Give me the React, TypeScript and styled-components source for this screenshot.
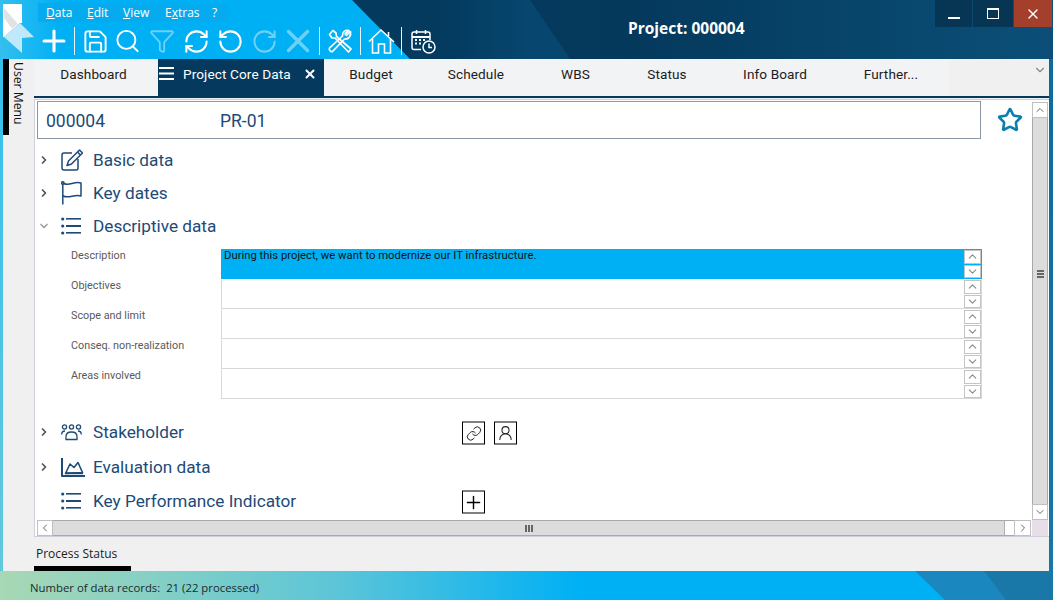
import React from 'react';
import styled, { createGlobalStyle } from 'styled-components';
import {
  ChevronDown,
  ChevronLeft,
  ChevronRight,
  ChevronUp,
  Funnel,
  Link,
  Plus,
  RefreshCw,
  RotateCcw,
  RotateCw,
  Save,
  Search,
  Star,
  UserRound,
  X,
} from 'lucide-react';

const GlobalStyle = createGlobalStyle`
  html, body {
    margin: 0;
    padding: 0;
    overflow: hidden;
  }
  * {
    box-sizing: border-box;
  }
`;

const Window = styled.div`
  position: relative;
  width: 1053px;
  height: 600px;
  overflow: hidden;
  display: grid;
  grid-template-rows: 59px 512px 29px;
  background: linear-gradient(90deg, #063f64 0%, #04395c 60%, #0b4f78 100%);
  font-family: Roboto, sans-serif;
`;

const Header = styled.header`
  position: relative;
  display: flex;
  padding-left: 3px;
  color: #fff;

  &::before {
    content: '';
    position: absolute;
    inset: 0;
    background: linear-gradient(90deg, #033a5e 440px, #07466f 530px);
    clip-path: polygon(0 0, 530px 0, 570px 100%, 0 100%);
  }

  &::after {
    content: '';
    position: absolute;
    inset: 0;
    background: linear-gradient(90deg, #34bfee 0, #00b0f5 60px);
    clip-path: polygon(0 0, 352px 0, 410px 100%, 0 100%);
  }

  > * {
    position: relative;
    z-index: 1;
  }
`;

const LogoMark = styled.svg`
  width: 33px;
  height: 54px;
  margin-top: 3px;
  flex: none;
`;

const HeaderTools = styled.div`
  display: flex;
  flex-direction: column;
  margin-left: 2px;
`;

const MenuBar = styled.nav`
  display: flex;
  align-items: center;
  width: 190px;
  height: 19px;
  margin-top: 3px;
  background: #05abee;
  font: 12px 'Open Sans', sans-serif;
`;

const MenuItem = styled.span<{ $width: number }>`
  width: ${(p) => p.$width}px;
  flex: none;
  padding-left: 8px;

  u {
    text-underline-offset: 1px;
  }
`;

const Toolbar = styled.div`
  display: flex;
  align-items: center;
  height: 32px;
  margin-top: 3px;
  margin-left: -1px;
`;

const ToolIcon = styled.span<{ $width: number; $faded?: boolean }>`
  width: ${(p) => p.$width}px;
  flex: none;
  display: flex;
  justify-content: center;
  opacity: ${(p) => (p.$faded ? 0.42 : 1)};
`;

const ToolDivider = styled.span<{ $offset?: number }>`
  width: 1px;
  height: 28px;
  flex: none;
  margin: 0 1px 0 ${(p) => p.$offset ?? 1}px;
  background: #e8f7fe;
`;

const ProjectTitle = styled.div`
  position: absolute;
  left: 628px;
  top: 18px;
  font: 700 15.5px 'Open Sans', sans-serif;
  line-height: 20px;
`;

const WindowButtons = styled.div`
  position: absolute;
  right: 1px;
  top: 0;
  display: flex;
  gap: 1px;
  height: 27px;
`;

const WindowButton = styled.div<{ $close?: boolean; $width: number }>`
  width: ${(p) => p.$width}px;
  display: flex;
  align-items: center;
  justify-content: center;
  background: ${(p) => (p.$close ? '#a33f2a' : '#063654')};
`;

const MinimizeMark = styled.span`
  width: 12px;
  height: 2px;
  margin-top: 8px;
  background: #fff;
`;

const MaximizeMark = styled.span`
  width: 12px;
  height: 11px;
  border: 1.5px solid #fff;
  border-top-width: 2.5px;
`;

const Middle = styled.div`
  display: grid;
  grid-template-columns: 3px 31px 1fr 4px;
  min-height: 0;
`;

const LeftEdge = styled.div`
  background: linear-gradient(180deg, #34bfee, #62c8dc);
`;

const RightEdge = styled.div`
  background: linear-gradient(180deg, #0f6a9c, #1876a8);
`;

const UserRail = styled.div`
  background: #f0f0f0;
`;

const RailTab = styled.div`
  width: 100%;
  height: 76px;
  padding: 3px 6px 0 0;
  border-left: 6px solid #000;
  display: flex;
  align-items: center;
  writing-mode: vertical-rl;
  font: 12.2px 'Open Sans', sans-serif;
  color: #111;
`;

const MainColumn = styled.main`
  display: flex;
  flex-direction: column;
  min-width: 0;
  background: #f0f0f0;
`;

const TabBar = styled.div`
  position: relative;
  display: flex;
  height: 39px;
  flex: none;
  border-bottom: 2px solid #053a5e;
`;

const Tab = styled.div<{ $width: number; $active?: boolean; $inset?: number }>`
  position: relative;
  width: ${(p) => p.$width}px;
  flex: none;
  display: flex;
  align-items: center;
  justify-content: center;
  padding: 0 ${(p) => p.$inset ?? 0}px 8px 0;
  background: ${(p) => (p.$active ? '#053a5e' : '#f2f3f5')};
  color: ${(p) => (p.$active ? '#fff' : '#1c1c1c')};
  font-size: 13.6px;
  letter-spacing: 0.1px;
`;

const ActiveTabInner = styled.div`
  display: flex;
  align-items: center;
  width: 100%;
  padding-left: 1px;
  white-space: nowrap;
`;

const TabMenuMark = styled.svg`
  width: 15px;
  height: 13px;
  margin-right: 9px;
  flex: none;
`;

const TabClose = styled.span`
  display: flex;
  margin-left: 12px;
`;

const TabOverflow = styled.div`
  position: absolute;
  right: 2px;
  top: 3px;
  color: #7d8a96;
`;

const Frame = styled.section`
  height: 438px;
  flex: none;
  margin-top: 1px;
  border: 1px solid #cfcfdc;
  border-right: 0;
  padding: 1px 1px 0 2px;
  background: #fff;
  display: grid;
  grid-template-columns: 1fr 16px;
  grid-template-rows: 1fr 16px;
`;

const Body = styled.div`
  min-height: 0;
  overflow: hidden;
`;

const ReferenceRow = styled.div`
  display: flex;
  align-items: center;
  margin-bottom: 4px;
`;

const ReferenceBox = styled.div`
  width: 944px;
  height: 38px;
  flex: none;
  border: 1px solid #8b97a3;
  display: flex;
  align-items: center;
  padding: 2px 0 0 8px;
  color: #1d4a77;
  font-size: 17.5px;
`;

const RefNumber = styled.span`
  width: 174px;
  flex: none;
`;

const FavStar = styled.div`
  margin-left: 16px;
  display: flex;
  color: #0b7fb2;
`;

const SectionRow = styled.div<{ $height: number }>`
  position: relative;
  display: flex;
  align-items: center;
  height: ${(p) => p.$height}px;
  color: #1d4a77;
  font-size: 17.2px;
`;

const Disclosure = styled.span<{ $open?: boolean }>`
  width: 24px;
  flex: none;
  display: flex;
  padding-left: 1px;
  color: ${(p) => (p.$open ? '#a0a0a0' : '#555')};
`;

const SectionIcon = styled.span`
  width: 32px;
  flex: none;
  display: flex;
  color: #1d4a77;
`;

const SectionActions = styled.div`
  position: absolute;
  left: 425px;
  top: calc(50% + 1px);
  transform: translateY(-50%);
  display: flex;
  gap: 9px;
`;

const SquareButton = styled.div`
  width: 23px;
  height: 23px;
  display: flex;
  align-items: center;
  justify-content: center;
  border: 1px solid #000;
  color: #222;
`;

const Form = styled.div`
  margin: 7px 0 15px;
  display: grid;
  grid-auto-rows: 30px;
`;

const FormRow = styled.div`
  display: grid;
  grid-template-columns: 184px 761px;
  grid-template-rows: 30px;
`;

const FormLabel = styled.div`
  padding-left: 34px;
  font-size: 10.8px;
  line-height: 13px;
  color: #5a5a5a;
`;

const FormField = styled.div<{ $selected?: boolean }>`
  display: flex;
  justify-content: space-between;
  border: 1px solid ${(p) => (p.$selected ? '#00b0f5' : '#d8d8d8')};
  border-top-color: ${(p) => (p.$selected ? '#00b0f5' : 'transparent')};
  background: ${(p) => (p.$selected ? '#00b0f5' : '#fff')};
  color: #111;
  font-size: 11.3px;
  line-height: 11px;
  padding-left: 2px;
`;

const SpinColumn = styled.div`
  width: 17px;
  flex: none;
  display: flex;
  flex-direction: column;
  gap: 1px;
`;

const SpinButton = styled.div`
  height: 13.5px;
  display: flex;
  align-items: center;
  justify-content: center;
  background: #fff;
  border: 1.5px solid #c4c4c4;
  color: #888;
`;

const VerticalBar = styled.div`
  display: flex;
  flex-direction: column;
  margin-top: 1px;
`;

const HorizontalBar = styled.div`
  display: flex;
  align-items: stretch;
  padding-right: 1px;
`;

const BarButton = styled.div<{ $wide?: boolean }>`
  width: ${(p) => (p.$wide ? 17 : 16)}px;
  height: 16px;
  flex: none;
  display: flex;
  align-items: center;
  justify-content: center;
  background: #fff;
  border: 1px solid #c0c0c0;
  color: #666;
`;

const VerticalGrip = styled.div`
  flex: 1;
  display: flex;
  flex-direction: column;
  gap: 1px;
  align-items: center;
  padding-top: 152px;
  border-left: 1px solid #a8a8a8;
  border-right: 1px solid #a8a8a8;
  background: #dcdcdc;

  span {
    width: 7px;
    height: 2px;
    background: #666;
  }
`;

const HorizontalGrip = styled.div`
  flex: 1;
  display: flex;
  gap: 1px;
  align-items: center;
  justify-content: center;
  padding-left: 1px;
  border-top: 1px solid #a8a8a8;
  border-bottom: 1px solid #a8a8a8;
  background: #dcdcdc;

  span {
    width: 2px;
    height: 7px;
    background: #666;
  }
`;

const BarBlank = styled.div`
  width: 10px;
  flex: none;
  background: #fff;
  border-left: 1px solid #b0b0b0;
  border-top: 1px solid #a8a8a8;
  border-bottom: 1px solid #a8a8a8;
`;

const BarCorner = styled.div`
  background: #e6dfe8;
`;

const ProcessBar = styled.div`
  flex: 1;
  display: flex;
  flex-direction: column;
  justify-content: space-between;
  padding-top: 8px;
  font: 12px 'Open Sans', sans-serif;
  color: #1c1c1c;
`;

const ProcessLabel = styled.div`
  padding-left: 2px;
`;

const ProcessMarker = styled.div`
  width: 97px;
  height: 5px;
  background: #000;
`;

const StatusBar = styled.footer`
  position: relative;
  display: flex;
  align-items: center;
  padding: 4px 0 0 30px;
  background: linear-gradient(90deg, #a8d8b4 0%, #5cc5d8 32%, #00b0f5 55%);
  font: 11.35px 'Open Sans', sans-serif;
  color: #1d2a2e;

  &::before {
    content: '';
    position: absolute;
    inset: 0;
    background: #1b87bf;
    clip-path: polygon(915px 0, 100% 0, 100% 100%, 945px 100%);
  }

  &::after {
    content: '';
    position: absolute;
    inset: 0;
    background: #1a78a8;
    clip-path: polygon(984px 0, 100% 0, 100% 100%, 1006px 100%);
  }
`;

const tabs = [
  { label: 'Dashboard', width: 124, inset: 5 },
  { label: 'Project Core Data', width: 166, active: true },
  { label: 'Budget', width: 94 },
  { label: 'Schedule', width: 116 },
  { label: 'WBS', width: 83 },
  { label: 'Status', width: 100 },
  { label: 'Info Board', width: 116 },
  { label: 'Further...', width: 116 },
];

const fields = [
  { label: 'Description', value: 'During this project, we want to modernize our IT infrastructure.', selected: true },
  { label: 'Objectives' },
  { label: 'Scope and limit' },
  { label: 'Conseq. non-realization' },
  { label: 'Areas involved' },
];

const ToolsIcon = () => (
  <svg width="26" height="26" viewBox="0 0 26 26" fill="none" stroke="#fff" strokeWidth="1.7" strokeLinejoin="round" strokeLinecap="round">
    <path d="M2.5 6.5 L6 2.5 L9 5 L9.5 8.5 L24 21 L21.5 24 L8 10 L5 10 Z" />
    <path d="M23.5 3.5 L19.5 7.5 L18 6 L22 2.5 C18.5 1.5 15 4 15.5 8 L2.5 20 C1.5 21.5 4 24.5 5.5 23.5 L17.5 11 C21.5 11.5 24.5 8 23.5 3.5 Z" />
  </svg>
);

const HomeIcon = () => (
  <svg width="27" height="26" viewBox="0 0 27 26" fill="none" stroke="#fff" strokeWidth="1.6" strokeLinejoin="miter">
    <path d="M1 13.5 L13 2 L26 14" />
    <path d="M4.5 11 V25 H10.5 V16 H16.5 V25 H22.5 V11" />
    <path d="M20.5 4 V8" />
  </svg>
);

const CalendarIcon = () => (
  <svg width="25" height="25" viewBox="0 0 25 25" fill="none" stroke="#fff" strokeWidth="1.5">
    <path d="M10 20.5 H3 Q1 20.5 1 18.5 V5 Q1 3 3 3 H17 Q19 3 19 5 V11" />
    <path d="M1 8 H19" strokeWidth="2" />
    <path d="M5.5 1 V5 M14.5 1 V5" />
    <path d="M4 11 h2 M8 11 h2 M12 11 h2 M4 14.5 h2 M8 14.5 h2" strokeWidth="2.2" />
    <circle cx="18" cy="18" r="6" />
    <path d="M18 14.5 V18.5 H21" />
  </svg>
);

const PenIcon = () => (
  <svg width="22" height="22" viewBox="0 0 22 22" fill="none" stroke="#1d4a77" strokeWidth="1.5" strokeLinejoin="round">
    <path d="M11 4 H3 Q1 4 1 6 V19 Q1 21 3 21 H15 Q17 21 17 19 V10" />
    <path d="M18.5 1 L21.5 4 L10.5 15 L6 16.5 L7.5 12 Z" />
    <path d="M16.5 3 L19.5 6" />
  </svg>
);

const FlagIcon = () => (
  <svg width="21" height="24" viewBox="0 0 21 24" fill="none" stroke="#1d4a77" strokeWidth="1.5" strokeLinecap="round" strokeLinejoin="round">
    <circle cx="1.8" cy="2" r="1.2" />
    <path d="M1.8 3.5 V23" />
    <path d="M3 2.5 C8 5.5 13 0 20 2 V15 C13 13 8 18 2 15" />
  </svg>
);

const ListIcon = () => (
  <svg width="20" height="18" viewBox="0 0 20 18" fill="#1d4a77">
    <circle cx="1.7" cy="2" r="1.6" />
    <circle cx="1.7" cy="9" r="1.6" />
    <circle cx="1.7" cy="16" r="1.6" />
    <rect x="5" y="1" width="15" height="1.6" />
    <rect x="5" y="8" width="15" height="2" />
    <rect x="5" y="15" width="15" height="1.6" />
  </svg>
);

const PeopleIcon = () => (
  <svg width="21" height="17" viewBox="0 0 21 17" fill="none" stroke="#1d4a77" strokeWidth="1.3">
    <circle cx="3.5" cy="3" r="2.1" />
    <circle cx="10.5" cy="3" r="2.1" />
    <circle cx="17.5" cy="3" r="2.1" />
    <path d="M5 15.5 V12.5 Q5 8 10.5 8 Q16 8 16 12.5 V15.5 Z" />
    <path d="M0.7 10.5 Q0.7 7 4 7 M20.3 10.5 Q20.3 7 17 7" />
  </svg>
);

const ChartIcon = () => (
  <svg width="24" height="19" viewBox="0 0 24 19" fill="none" stroke="#1d4a77" strokeWidth="1.6" strokeLinejoin="round">
    <path d="M1 0 V18 H24" strokeWidth="2" />
    <path d="M4.5 15.5 L9 6 L13 9.5 L17 4.5 L21.5 14.5 Z" />
    <path d="M4.5 15.2 H22" strokeWidth="2" />
  </svg>
);

const App = (): JSX.Element => {
  return (
    <>
      <GlobalStyle />
      <Window>
        <Header>
          <LogoMark viewBox="0 0 33 54">
            <path d="M0 2 Q0 1 1 1 H18 Q19 1 19 2 V20 H17 L1 34 H0 Z" fill="#fff" />
            <path d="M1 5 L15 21 L9 25.5 L1 15 Z" fill="#e2e2e2" />
            <path d="M17 20 L31 34 L19 35 V50 L1 34 Z" fill="#bfe9fb" />
          </LogoMark>
          <HeaderTools>
            <MenuBar>
              <MenuItem $width={41}><u>D</u>ata</MenuItem>
              <MenuItem $width={36}><u>E</u>dit</MenuItem>
              <MenuItem $width={42}><u>V</u>iew</MenuItem>
              <MenuItem $width={47}>E<u>x</u>tras</MenuItem>
              <MenuItem $width={20}>?</MenuItem>
            </MenuBar>
            <Toolbar>
              <ToolIcon $width={34}><Plus size={34} strokeWidth={2.2} /></ToolIcon>
              <ToolDivider $offset={3} />
              <ToolIcon $width={38}><Save size={27} strokeWidth={1.7} /></ToolIcon>
              <ToolIcon $width={27}><Search size={28} strokeWidth={1.7} /></ToolIcon>
              <ToolIcon $width={41} $faded><Funnel size={26} strokeWidth={1.7} /></ToolIcon>
              <ToolIcon $width={28}><RefreshCw size={27} strokeWidth={1.8} /></ToolIcon>
              <ToolIcon $width={40}><RotateCcw size={27} strokeWidth={1.8} /></ToolIcon>
              <ToolIcon $width={28} $faded><RotateCw size={27} strokeWidth={1.8} /></ToolIcon>
              <ToolIcon $width={40} $faded><X size={38} strokeWidth={2.2} /></ToolIcon>
              <ToolDivider />
              <ToolIcon $width={38}><ToolsIcon /></ToolIcon>
              <ToolDivider />
              <ToolIcon $width={38}><HomeIcon /></ToolIcon>
              <ToolDivider />
              <ToolIcon $width={40}><CalendarIcon /></ToolIcon>
            </Toolbar>
          </HeaderTools>
          <ProjectTitle>Project: 000004</ProjectTitle>
          <WindowButtons>
            <WindowButton $width={37}><MinimizeMark /></WindowButton>
            <WindowButton $width={40}><MaximizeMark /></WindowButton>
            <WindowButton $close $width={38}><X size={16} strokeWidth={2} /></WindowButton>
          </WindowButtons>
        </Header>

        <Middle>
          <LeftEdge />
          <UserRail>
            <RailTab>User Menu</RailTab>
          </UserRail>
          <MainColumn>
            <TabBar>
              {tabs.map((tab) => (
                <Tab key={tab.label} $width={tab.width} $active={tab.active} $inset={tab.inset}>
                  {tab.active ? (
                    <ActiveTabInner>
                      <TabMenuMark viewBox="0 0 15 13" fill="#fff">
                        <rect width="15" height="2" />
                        <rect y="5.5" width="15" height="2" />
                        <rect y="11" width="15" height="2" />
                      </TabMenuMark>
                      {tab.label}
                      <TabClose><X size={14} strokeWidth={3.4} /></TabClose>
                    </ActiveTabInner>
                  ) : (
                    tab.label
                  )}
                </Tab>
              ))}
              <TabOverflow><ChevronDown size={14} strokeWidth={2} /></TabOverflow>
            </TabBar>

            <Frame>
              <Body>
                <ReferenceRow>
                  <ReferenceBox>
                    <RefNumber>000004</RefNumber>
                    PR-01
                  </ReferenceBox>
                  <FavStar><Star size={26} strokeWidth={2.4} /></FavStar>
                </ReferenceRow>

                <SectionRow $height={33}>
                  <Disclosure><ChevronRight size={12} strokeWidth={3.4} /></Disclosure>
                  <SectionIcon><PenIcon /></SectionIcon>
                  Basic data
                </SectionRow>
                <SectionRow $height={33}>
                  <Disclosure><ChevronRight size={12} strokeWidth={3.4} /></Disclosure>
                  <SectionIcon><FlagIcon /></SectionIcon>
                  Key dates
                </SectionRow>
                <SectionRow $height={33}>
                  <Disclosure $open><ChevronDown size={12} strokeWidth={3.4} /></Disclosure>
                  <SectionIcon><ListIcon /></SectionIcon>
                  Descriptive data
                </SectionRow>

                <Form>
                  {fields.map((field) => (
                    <FormRow key={field.label}>
                      <FormLabel>{field.label}</FormLabel>
                      <FormField $selected={field.selected}>
                        <span>{field.value}</span>
                        <SpinColumn>
                          <SpinButton><ChevronUp size={13} strokeWidth={2} /></SpinButton>
                          <SpinButton><ChevronDown size={13} strokeWidth={2} /></SpinButton>
                        </SpinColumn>
                      </FormField>
                    </FormRow>
                  ))}
                </Form>

                <SectionRow $height={36}>
                  <Disclosure><ChevronRight size={12} strokeWidth={3.4} /></Disclosure>
                  <SectionIcon><PeopleIcon /></SectionIcon>
                  Stakeholder
                  <SectionActions>
                    <SquareButton><Link size={16} strokeWidth={1.5} /></SquareButton>
                    <SquareButton><UserRound size={17} strokeWidth={1.5} /></SquareButton>
                  </SectionActions>
                </SectionRow>
                <SectionRow $height={34}>
                  <Disclosure><ChevronRight size={12} strokeWidth={3.4} /></Disclosure>
                  <SectionIcon><ChartIcon /></SectionIcon>
                  Evaluation data
                </SectionRow>
                <SectionRow $height={34}>
                  <Disclosure />
                  <SectionIcon><ListIcon /></SectionIcon>
                  Key Performance Indicator
                  <SectionActions>
                    <SquareButton><Plus size={24} strokeWidth={1.6} color="#000" /></SquareButton>
                  </SectionActions>
                </SectionRow>
              </Body>

              <VerticalBar>
                <BarButton><ChevronUp size={12} strokeWidth={2} /></BarButton>
                <VerticalGrip><span /><span /><span /></VerticalGrip>
                <BarButton><ChevronDown size={12} strokeWidth={2} /></BarButton>
              </VerticalBar>

              <HorizontalBar>
                <BarButton><ChevronLeft size={12} strokeWidth={2} /></BarButton>
                <HorizontalGrip><span /><span /><span /></HorizontalGrip>
                <BarBlank />
                <BarButton $wide><ChevronRight size={12} strokeWidth={2} /></BarButton>
              </HorizontalBar>
              <BarCorner />
            </Frame>

            <ProcessBar>
              <ProcessLabel>Process Status</ProcessLabel>
              <ProcessMarker />
            </ProcessBar>
          </MainColumn>
          <RightEdge />
        </Middle>

        <StatusBar>Number of data records:&nbsp; 21 (22 processed)</StatusBar>
      </Window>
    </>
  );
};

export default App;
